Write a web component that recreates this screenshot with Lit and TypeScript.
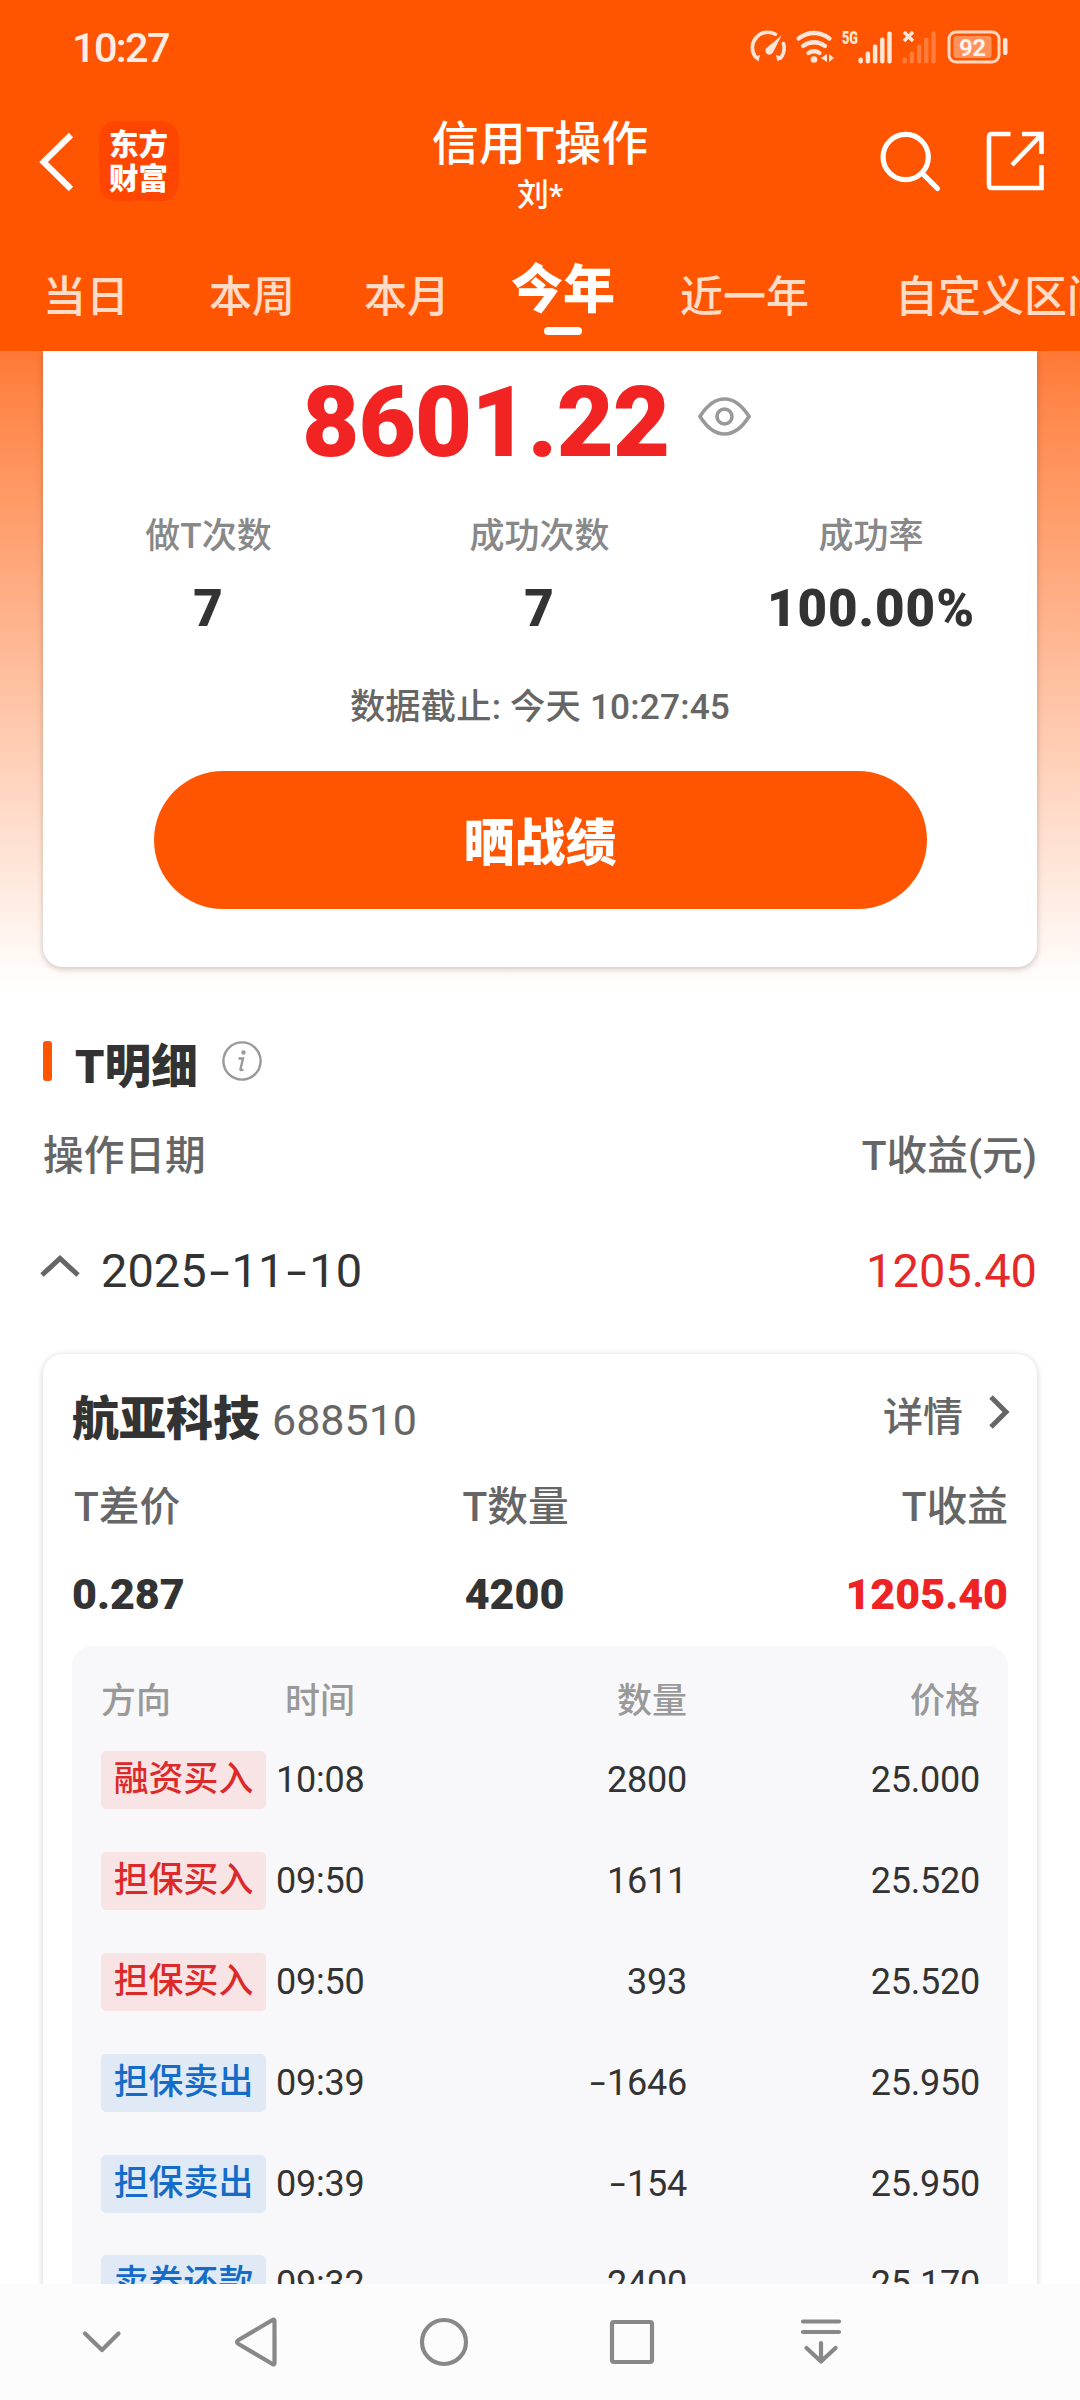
import { LitElement, html, svg, css } from "lit";
import { customElement } from "lit/decorators.js";
import { classMap } from "lit/directives/class-map.js";

interface Trade { side: "buy" | "sell"; kind: string; time: string; qty: string; price: string }

const TABS = ["当日", "本周", "本月", "今年", "近一年", "自定义区间"];
const TRADES: Trade[] = [
  { side: "buy", kind: "融资买入", time: "10:08", qty: "2800", price: "25.000" },
  { side: "buy", kind: "担保买入", time: "09:50", qty: "1611", price: "25.520" },
  { side: "buy", kind: "担保买入", time: "09:50", qty: "393", price: "25.520" },
  { side: "sell", kind: "担保卖出", time: "09:39", qty: "-1646", price: "25.950" },
  { side: "sell", kind: "担保卖出", time: "09:39", qty: "-154", price: "25.950" },
  { side: "sell", kind: "卖券还款", time: "09:32", qty: "2400", price: "25.170" },
];

const bars = (x: number) => [6, 12, 19, 26, 32].map((h, i) =>
  svg`<rect x=${x + i * 7.2} y=${63.5 - h} width="4.4" height=${h} rx="2"/>`);

/** Sets hyphens in a wider cell so that they read as full-width dashes between digits. */
const dashed = (s: string) => s.split(/(-)/).map(p => (p === "-" ? html`<i class="dash">-</i>` : p));

@customElement("app-root")
export class AppRoot extends LitElement {
  static styles = css`
    :host { display: block; width: 1080px; height: 2400px; overflow: hidden; background: #fff;
      font-family: Roboto, "Noto Sans CJK SC", sans-serif; color: #333; font-size: 35px; }
    * { box-sizing: border-box; }
    svg { display: block; flex: none; }
    .screen { display: flex; flex-direction: column; height: 2400px; }
    .top { background: #ff5500; color: #fff; height: 351px; flex: none; }
    .status { height: 96px; display: flex; justify-content: space-between; }
    .clock { padding: 23px 0 0 72px; font-size: 41.5px; line-height: 50px; font-weight: 500; color: #ffece2; letter-spacing: -1.7px; }
    .bar { height: 132px; display: grid; grid-template-columns: 300px 1fr 300px; }
    .left { display: flex; padding: 25px 0 0 38px; }
    .logo { width: 80px; height: 80px; margin-left: 23px; border-radius: 17px; background: #ff4600; display: flex;
      flex-direction: column; padding: 7px 0 0 10px; font-size: 29.500px; line-height: 34px; font-weight: 900; }
    .title { text-align: center; }
    .name { font-size: 47px; line-height: 60px; padding-top: 18px; font-weight: 500; }
    .user { font-size: 32px; line-height: 42px; font-weight: 500; }
    .tabs { display: flex; height: 123px; padding-left: 43px; white-space: nowrap; overflow: hidden; color: #ffdcc8; }
    .tab { font-size: 43px; line-height: 60px; padding-top: 39px; flex: none; width: 166px; font-weight: 500; }
    .tab.t1 { width: 155px; }
    .tab.t2 { width: 147px; }
    .tab.t3 { width: 169px; }
    .tab.t4 { width: 215px; }
    .tab.on { color: #fff; font-size: 52px; font-weight: 900; padding-top: 33px; }
    .tab.on::after { content: ""; display: block; width: 38px; height: 8px; border-radius: 4px; background: #fff; margin: 6px 0 0 33px; }
    .body { height: 1933px; flex: none; overflow: hidden; }
    .hero { height: 651px; padding: 0 43px; background: linear-gradient(#ff7835 0%, #ff8547 7%, #fff 98%); }
    .summary { height: 616px; background: #fff; border-radius: 0 0 20px 20px; box-shadow: 0 2px 6px rgba(80,50,30,.28); text-align: center; }
    .total { display: flex; height: 145px; align-items: flex-start; padding: 12px 0 0 259px; }
    .amount { font-size: 99px; line-height: 118px; font-weight: 900; color: #f12323; width: 396px; text-align: left; letter-spacing: -1px; }
    .eye { margin-top: 33px; }
    .stats { display: grid; grid-template-columns: 331px 331px 332px; }
    .label { color: #888; line-height: 50px; padding-top: 16px; font-weight: 500; }
    .value { font-size: 51px; line-height: 60px; font-weight: 900; padding-top: 17px; letter-spacing: 1px; }
    .asof { color: #666; font-size: 35.300px; line-height: 50px; margin-top: 43px; white-space: pre; letter-spacing: .15px; font-weight: 500; }
    .share { height: 138px; width: 773px; margin: 39px auto 0; background: #ff5500; border-radius: 69px; color: #fff;
      font-size: 51px; font-weight: 900; line-height: 138px; padding-top: 4px; }
    .row { display: flex; justify-content: space-between; align-items: center; }
    .section { height: 100px; display: flex; align-items: center; padding: 18px 43px 0; }
    .mark { width: 9px; height: 40px; border-radius: 3px; background: #ff5500; }
    .heading { font-size: 46.700px; font-weight: 900; margin: 2px 24px 0 23px; }
    .cols { height: 100px; padding: 0 43px; font-size: 40.700px; color: #666; font-weight: 500; }
    .day { height: 130px; padding: 6px 43px 0 40px; font-size: 47px; }
    .date { display: flex; align-items: center; gap: 21px; }
    .dash { display: inline-block; font-style: normal; width: .53em; text-align: center; transform: scaleX(1.55); }
    .red { color: #e52828; }
    .card { margin: 22px 43px 0; height: 1100px; border-radius: 20px; padding: 0 29px; background: #fff; box-shadow: 0 1px 6px rgba(0,0,0,.2); }
    .stock { height: 126px; padding-bottom: 6px; }
    .stock-name { font-size: 47px; font-weight: 900; }
    .code { font-size: 43px; color: #666; margin-left: 12px; }
    .detail { display: flex; align-items: center; gap: 25px; font-size: 40px; color: #666; font-weight: 500; margin-right: -2px; }
    .metrics { display: grid; grid-template-columns: 312px 261px 1fr; text-align: center; height: 166px; font-size: 40.700px; color: #666; }
    .metrics > :first-child { text-align: left; }
    .metrics > :last-child { text-align: right; }
    .metric-label { line-height: 50px; padding: 2px 0 0 2px; font-weight: 500; }
    .metric-value { font-size: 43px; font-weight: 900; color: #333; line-height: 60px; padding-top: 32px; }
    .metric-value.red { color: #ee2424; }
    .panel { background: #f8f8fa; border-radius: 20px; padding: 1px 28px 0 29px; height: 800px; }
    .line { display: grid; grid-template-columns: 175px 110px 1fr 293px; height: 100.800px; align-items: center; text-align: right; font-size: 36px; letter-spacing: -.25px; }
    .line > :nth-child(2) { text-align: left; }
    .line.head { height: 83px; font-size: 35px; color: #999; padding-top: 17px; font-weight: 500; letter-spacing: 0; }
    .line.head > :first-child { text-align: left; }
    .line.head > :nth-child(2) { padding-left: 9px; }
    .tag { width: 165px; height: 58px; border-radius: 5px; font-size: 34.900px; line-height: 57px; text-align: center; font-weight: 500; letter-spacing: 0; }
    .tag.buy { color: #dc2a2a; background: #f9e4e5; }
    .tag.sell { color: #156bc8; background: #dfeaf6; }
    .nav { height: 116px; background: #fcfcfc; flex: none; }
  `;

  render() {
    return html`<div class="screen">
      <header class="top">
        <div class="status">
          <div class="clock">10:27</div>
          <svg width="340" height="96" viewBox="740 0 340 96" fill="#ffe6d8">
            <g fill="none" stroke="#ffe6d8" stroke-width="3.600" stroke-linecap="round">
              <path d="M755.500 57A15.500 15.500 0 0 1 775.500 34.200M783.500 43.500A16 16 0 0 1 780.500 58"/>
              <path d="M798.500 38.500Q814 27.500 829.500 38.500M803 46Q814 38.500 825 46M808.500 53Q814 49.500 819.500 53" stroke-width="4.200"/>
            </g>
            <path d="M753 57l7-2-1.500 6.500zM783 57l-7-2 1.500 6.500zM781.500 35.500L773 52.500A4 4 0 1 1 767 47.500z"/>
            <circle cx="814" cy="59.500" r="3.300"/>
            <path d="M827 54v8l-6-4zM829 54l5 4-5 4z"/>
            <text x="842" y="44" font-size="19" font-weight="900" textLength="16" lengthAdjust="spacingAndGlyphs">5G</text>
            ${bars(858.5)}<g opacity=".28">${bars(902.5)}</g>
            <path d="M904 32l9 9M913 32l-9 9" stroke="#ffe6d8" stroke-width="3.400"/>
            <rect x="949" y="32" width="50" height="30" rx="7" fill="none" stroke="#ffd9c4" stroke-width="3"/>
            <rect x="953.500" y="36" width="38" height="22" rx="3" opacity=".42"/>
            <rect x="1003" y="38" width="4.500" height="17" rx="2"/>
            <text x="959" y="55.500" font-size="24" font-weight="700" fill="#fff3ec" textLength="27">92</text>
          </svg>
        </div>
        <div class="bar">
          <div class="left">
            <svg width="38" height="82" viewBox="38 121 38 82"><path d="M71 135L43.500 162L71 189" fill="none" stroke="#fff" stroke-width="6"/></svg>
            <div class="logo"><span>东方</span><span>财富</span></div>
          </div>
          <div class="title"><div class="name">信用T操作</div><div class="user">刘*</div></div>
          <svg width="300" height="132" viewBox="780 96 300 132" fill="none" stroke="#fff" stroke-width="5.200">
            <circle cx="905.700" cy="157" r="22.600"/><path d="M922 173L937.500 188.500" stroke-linecap="round"/>
            <path d="M1010.500 134H992q-3 0-3 3v48q0 3 3 3h49.500V165M1022 134h19.500V154M1012 165L1041.500 134.500" stroke-width="4.600"/>
          </svg>
        </div>
        <nav class="tabs">${TABS.map((t, i) => html`<div class=${classMap({ tab: true, on: i === 3, ["t" + i]: true })}>${t}</div>`)}</nav>
      </header>
      <main class="body">
        <div class="hero"><div class="summary">
          <div class="total"><div class="amount">8601.22</div>
            <svg class="eye" width="53" height="42" viewBox="0 0 53 42" fill="none" stroke="#999" stroke-width="3.600"><path d="M2 20.500Q13 3 26.500 3T51 20.500Q40 38 26.500 38T2 20.500Z"/><circle cx="26.500" cy="20.500" r="7.500"/></svg>
          </div>
          <div class="stats">
            ${[["做T次数", "7"], ["成功次数", "7"], ["成功率", "100.00%"]].map(([l, v]) => html`<div><div class="label">${l}</div><div class="value">${v}</div></div>`)}
          </div>
          <div class="asof">数据截止: 今天 10:27:45</div>
          <div class="share">晒战绩</div>
        </div></div>
        <div class="section"><div class="mark"></div><div class="heading">T明细</div>
          <svg width="40" height="40" viewBox="0 0 40 40" fill="none" stroke="#999" stroke-width="2.400"><circle cx="20" cy="20" r="18.600"/><path d="M16.500 17.500h4.500l-2.500 10.500q-.5 2 3 .5"/><circle cx="21.500" cy="11.500" r="1" fill="#999"/></svg>
        </div>
        <div class="row cols"><span>操作日期</span><span>T收益(元)</span></div>
        <div class="row day"><span class="date"><svg width="40" height="30" viewBox="0 0 40 30"><path d="M2 20L20 3.500L38 20" fill="none" stroke="#666" stroke-width="5"/></svg><span>${dashed("2025-11-10")}</span></span><span class="red">1205.40</span></div>
        <section class="card">
          <div class="row stock"><span><span class="stock-name">航亚科技</span><span class="code">688510</span></span>
            <span class="detail">详情<svg width="22" height="40" viewBox="0 0 22 40"><path d="M3 3L18 18L3 33" fill="none" stroke="#666" stroke-width="5"/></svg></span></div>
          <div class="metrics">
            <div><div class="metric-label">T差价</div><div class="metric-value">0.287</div></div>
            <div><div class="metric-label">T数量</div><div class="metric-value">4200</div></div>
            <div><div class="metric-label">T收益</div><div class="metric-value red">1205.40</div></div>
          </div>
          <div class="panel">
            <div class="line head"><span>方向</span><span>时间</span><span>数量</span><span>价格</span></div>
            <div>${TRADES.map(t => html`<div class="line"><div class="tag ${t.side}">${t.kind}</div><span>${t.time}</span><span>${dashed(t.qty)}</span><span>${t.price}</span></div>`)}</div>
          </div>
        </section>
      </main>
      <footer class="nav">
        <svg width="1080" height="116" viewBox="0 2284 1080 116" fill="none" stroke="#888" stroke-width="4.200" stroke-linecap="round" stroke-linejoin="round">
          <path d="M85 2333.500L102 2350L118.500 2333.500"/>
          <path d="M274.500 2321v42q0 2-2 1l-34-20q-3-2 0-4l34-20q2-1 2 1z"/>
          <circle cx="444" cy="2342" r="22"/><rect x="612" y="2322" width="40" height="40" rx="2"/>
          <path d="M803 2321.500h36M803 2332h36M821 2343v18M806.500 2348L821 2361.500L835.500 2348"/>
        </svg>
      </footer>
    </div>`;
  }
}
